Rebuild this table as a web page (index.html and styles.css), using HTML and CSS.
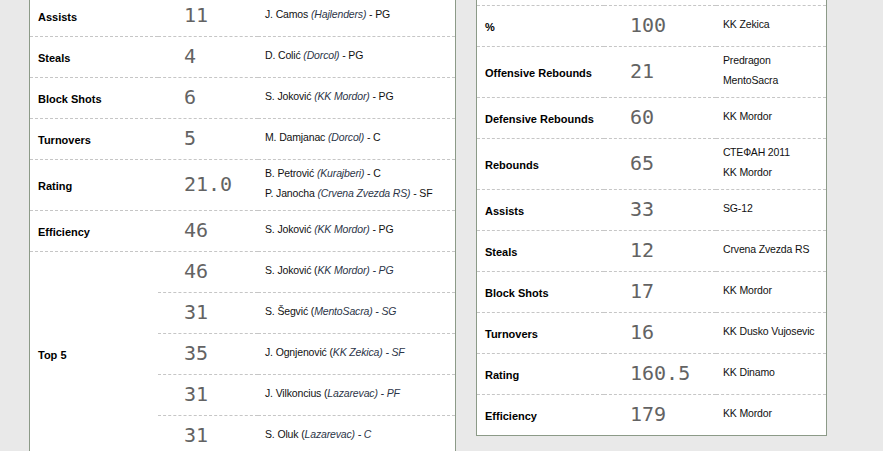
FILE: index.html
```html
<!DOCTYPE html>
<html lang="sr">
<head>
<meta charset="utf-8">
<title>Stats</title>
<link rel="stylesheet" href="styles.css">
</head>
<body>
<div class="page">
  <div class="panel panel-left">
    <div class="lbl">Assists</div><div class="val">11</div><div class="nm"><span>J. Camos <i>(Hajlenders)</i> - PG</span></div>
    <div class="lbl">Steals</div><div class="val">4</div><div class="nm"><span>D. Colić <i>(Dorcol)</i> - PG</span></div>
    <div class="lbl">Block Shots</div><div class="val">6</div><div class="nm"><span>S. Joković <i>(KK Mordor)</i> - PG</span></div>
    <div class="lbl">Turnovers</div><div class="val">5</div><div class="nm"><span>M. Damjanac <i>(Dorcol)</i> - C</span></div>
    <div class="lbl">Rating</div><div class="val">21.0</div><div class="nm"><span>B. Petrović <i>(Kurajberi)</i> - C</span><span>P. Janocha <i>(Crvena Zvezda RS)</i> - SF</span></div>
    <div class="lbl">Efficiency</div><div class="val">46</div><div class="nm"><span>S. Joković <i>(KK Mordor)</i> - PG</span></div>
    <div class="lbl top5">Top 5</div>
    <div class="val">46</div><div class="nm"><span>S. Joković (<i>KK Mordor) - PG</i></span></div>
    <div class="val">31</div><div class="nm"><span>S. Šegvić (<i>MentoSacra) - SG</i></span></div>
    <div class="val">35</div><div class="nm"><span>J. Ognjenović (<i>KK Zekica) - SF</i></span></div>
    <div class="val">31</div><div class="nm"><span>J. Vilkoncius (<i>Lazarevac) - PF</i></span></div>
    <div class="val">31</div><div class="nm"><span>S. Oluk (<i>Lazarevac) - C</i></span></div>
  </div>
  <div class="panel panel-right">
    <div class="lbl"></div><div class="val"></div><div class="nm"></div>
    <div class="lbl">%</div><div class="val">100</div><div class="nm"><span>KK Zekica</span></div>
    <div class="lbl">Offensive Rebounds</div><div class="val">21</div><div class="nm"><span>Predragon</span><span>MentoSacra</span></div>
    <div class="lbl">Defensive Rebounds</div><div class="val">60</div><div class="nm"><span>KK Mordor</span></div>
    <div class="lbl">Rebounds</div><div class="val">65</div><div class="nm"><span>СТЕФАН 2011</span><span>KK Mordor</span></div>
    <div class="lbl">Assists</div><div class="val">33</div><div class="nm"><span>SG-12</span></div>
    <div class="lbl">Steals</div><div class="val">12</div><div class="nm"><span>Crvena Zvezda RS</span></div>
    <div class="lbl">Block Shots</div><div class="val">17</div><div class="nm"><span>KK Mordor</span></div>
    <div class="lbl">Turnovers</div><div class="val">16</div><div class="nm"><span>KK Dusko Vujosevic</span></div>
    <div class="lbl">Rating</div><div class="val">160.5</div><div class="nm"><span>KK Dinamo</span></div>
    <div class="lbl last">Efficiency</div><div class="val last">179</div><div class="nm last"><span>KK Mordor</span></div>
  </div>
</div>
</body>
</html>
```

FILE: styles.css
```css
html, body {
  margin: 0;
  padding: 0;
  background: #e9e9e9;
  font-family: "Liberation Sans", Arial, sans-serif;
}

.page {
  display: flex;
  align-items: flex-start;
  gap: 20px;
  padding-left: 29px;
  margin-top: -36px;
}

.panel {
  display: grid;
  background: #ffffff;
  border: 1px solid #8c9a88;
}

.panel-left {
  width: 425px;
  margin-top: 31px;
  grid-template-columns: 128px 100px 1fr;
}

.panel-right {
  width: 349px;
  grid-template-columns: 127px 112px 1fr;
}

.lbl, .val, .nm {
  box-sizing: border-box;
  min-height: 41px;
  border-bottom: 1px dashed #c6c6c6;
  display: flex;
}

.lbl {
  align-items: center;
  padding: 2px 0 0 8px;
  font-size: 11px;
  font-weight: bold;
  color: #000;
}

.top5 {
  grid-row: span 5;
}

.val {
  align-items: center;
  padding: 0 0 3px 26px;
  font-family: "DejaVu Sans Mono", "Liberation Mono", monospace;
  font-size: 20px;
  color: #636363;
}

.nm {
  flex-direction: column;
  justify-content: center;
  padding: 3px 4px 7px 7px;
  font-size: 10.5px;
  letter-spacing: -0.15px;
  line-height: 20px;
  color: #111;
  white-space: nowrap;
}

.nm i {
  color: #2c3548;
}

.last {
  border-bottom: none;
  min-height: 40px;
}
```
